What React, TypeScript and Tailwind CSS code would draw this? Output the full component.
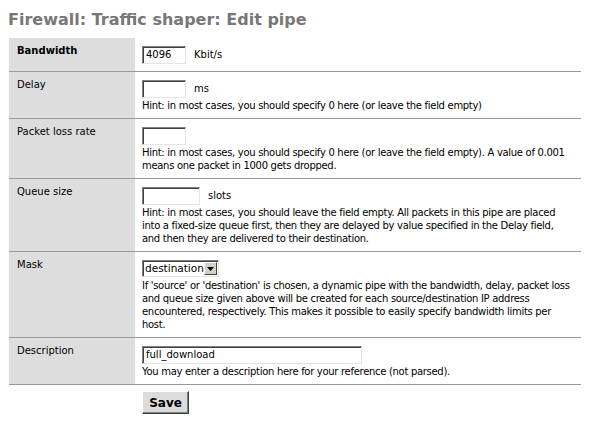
import React from "react";

const fieldCls =
  "h-[18px] overflow-hidden whitespace-nowrap border border-t-[#7f7f7f] border-l-[#7f7f7f] border-b-[#e4e4e4] border-r-[#e4e4e4] shadow-[inset_1px_1px_0_#404040] bg-white pl-[3px] text-[10px] leading-[15px] text-black";

function Field({ w, value }: { w: string; value?: string }) {
  return <div className={fieldCls + " " + w}>{value ?? ""}</div>;
}

function Row({
  label,
  bold,
  children,
}: {
  label: string;
  bold?: boolean;
  children: React.ReactNode;
}) {
  return (
    <div className="flex border-b border-[#999999]">
      <div
        className={
          bold
            ? "w-[126px] shrink-0 bg-[#dddddd] pl-[8px] pt-[6px] leading-[13.4px] font-bold"
            : "w-[126px] shrink-0 bg-[#dddddd] pl-[8px] pt-[6px] leading-[13.4px]"
        }
      >
        {label}
      </div>
      <div className="flex-1 pl-[7px] pt-[6px] pb-[6px]">{children}</div>
    </div>
  );
}

function Hint({ lines }: { lines: string[] }) {
  return (
    <div className="leading-[13px] whitespace-nowrap tracking-[-0.3px]">
      {lines.map((l, i) => (
        <div key={i}>{l}</div>
      ))}
    </div>
  );
}

function FirstLine({ children }: { children: React.ReactNode }) {
  return <div className="flex h-[21px] items-center">{children}</div>;
}

export default function App() {
  return (
    <div className="min-h-[423px] w-[591px] bg-white text-black font-['DejaVu_Sans',sans-serif] text-[10px]">
      <div className="pl-[8px] pt-[10px] mb-[8px] text-[16px] leading-[20px] font-bold text-[#777777]">
        Firewall: Traffic shaper: Edit pipe
      </div>
      <div className="ml-[9px] w-[572px]">
        <Row label="Bandwidth" bold>
          <FirstLine>
            <Field w="w-[44px]" value="4096" />
            <span className="ml-[8px]">Kbit/s</span>
          </FirstLine>
        </Row>
        <Row label="Delay">
          <FirstLine>
            <Field w="w-[44px]" />
            <span className="ml-[8px]">ms</span>
          </FirstLine>
          <Hint lines={["Hint: in most cases, you should specify 0 here (or leave the field empty)"]} />
        </Row>
        <Row label="Packet loss rate">
          <FirstLine>
            <Field w="w-[44px]" />
          </FirstLine>
          <Hint
            lines={[
              "Hint: in most cases, you should specify 0 here (or leave the field empty). A value of 0.001",
              "means one packet in 1000 gets dropped.",
            ]}
          />
        </Row>
        <Row label="Queue size">
          <FirstLine>
            <Field w="w-[58px]" />
            <span className="ml-[8px]">slots</span>
          </FirstLine>
          <Hint
            lines={[
              "Hint: in most cases, you should leave the field empty. All packets in this pipe are placed",
              "into a fixed-size queue first, then they are delayed by value specified in the Delay field,",
              "and then they are delivered to their destination.",
            ]}
          />
        </Row>
        <Row label="Mask">
          <FirstLine>
            <div className="flex h-[17px] w-[77px] items-center border border-t-[#7f7f7f] border-l-[#7f7f7f] border-b-[#e4e4e4] border-r-[#e4e4e4] shadow-[inset_1px_1px_0_#404040] bg-white pl-[2px] pr-[1px]">
              <span className="flex-1 leading-[13px] text-[10.5px]">destination</span>
              <div className="flex h-[13px] w-[14px] items-center justify-center bg-[#d4d0c8] border border-t-white border-l-white border-b-[#404040] border-r-[#404040]">
                <svg width="7" height="4" viewBox="0 0 7 4">
                  <path d="M0 0H7L3.5 4Z" fill="#000" />
                </svg>
              </div>
            </div>
          </FirstLine>
          <Hint
            lines={[
              "If 'source' or 'destination' is chosen, a dynamic pipe with the bandwidth, delay, packet loss",
              "and queue size given above will be created for each source/destination IP address",
              "encountered, respectively. This makes it possible to easily specify bandwidth limits per",
              "host.",
            ]}
          />
        </Row>
        <Row label="Description">
          <FirstLine>
            <Field w="w-[220px]" value="full_download" />
          </FirstLine>
          <Hint lines={["You may enter a description here for your reference (not parsed)."]} />
        </Row>
        <div className="flex">
          <div className="w-[126px] shrink-0" />
          <div className="pl-[7px] pt-[6px]">
            <button className="flex h-[23px] w-[47px] items-center justify-center bg-[#dcdcdc] border border-t-white border-l-white border-b-[#404040] border-r-[#404040] shadow-[inset_-1px_-1px_0_#808080] text-[12px] font-bold text-black font-['DejaVu_Sans',sans-serif]">
              Save
            </button>
          </div>
        </div>
      </div>
    </div>
  );
}
